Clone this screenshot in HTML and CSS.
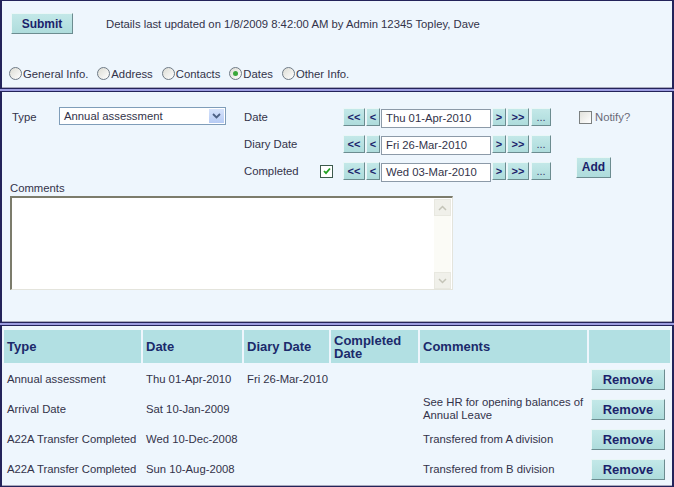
FILE: index.html
```html
<!DOCTYPE html>
<html lang="en">
<head>
  <meta charset="UTF-8" />
  <link rel="stylesheet" href="styles.css">
</head>
<body>
  <div class="page">

    <div class="panel panel-top">
      <div class="top-row">
        <button class="btn btn-submit">Submit</button>
        <span class="updated">Details last updated on 1/8/2009 8:42:00 AM by Admin 12345 Topley, Dave</span>
      </div>
      <div class="tabs">
        <label class="radio"><span class="dot"></span>General Info.</label>
        <label class="radio"><span class="dot"></span>Address</label>
        <label class="radio"><span class="dot"></span>Contacts</label>
        <label class="radio"><span class="dot on"></span>Dates</label>
        <label class="radio"><span class="dot"></span>Other Info.</label>
      </div>
    </div>

    <div class="panel panel-form">
      <div class="form-grid">
        <span class="lbl lbl-type">Type</span>
        <div class="select">
          <span class="select-text">Annual assessment</span>
          <span class="select-arrow">
            <svg width="9" height="6" viewBox="0 0 9 6"><path d="M1 1 L4.5 4.5 L8 1" fill="none" stroke="#4d6185" stroke-width="1.8"/></svg>
          </span>
        </div>
        <span class="lbl">Date</span>
        <span></span>
        <div class="datepick">
          <button class="btn nav">&lt;&lt;</button><button class="btn nav nav-s">&lt;</button><span class="date-input">Thu 01-Apr-2010</span><button class="btn nav nav-s">&gt;</button><button class="btn nav">&gt;&gt;</button><button class="btn nav nav-dots">...</button>
        </div>
        <label class="notify"><span class="check"></span>Notify?</label>

        <span></span>
        <span></span>
        <span class="lbl">Diary Date</span>
        <span></span>
        <div class="datepick">
          <button class="btn nav">&lt;&lt;</button><button class="btn nav nav-s">&lt;</button><span class="date-input">Fri 26-Mar-2010</span><button class="btn nav nav-s">&gt;</button><button class="btn nav">&gt;&gt;</button><button class="btn nav nav-dots">...</button>
        </div>
        <span></span>

        <span></span>
        <span></span>
        <span class="lbl">Completed</span>
        <span class="check checked">
          <svg width="10" height="10" viewBox="0 0 10 10"><path d="M2 5 L4 7.2 L8 2.5" fill="none" stroke="#21a121" stroke-width="1.8"/></svg>
        </span>
        <div class="datepick">
          <button class="btn nav">&lt;&lt;</button><button class="btn nav nav-s">&lt;</button><span class="date-input">Wed 03-Mar-2010</span><button class="btn nav nav-s">&gt;</button><button class="btn nav">&gt;&gt;</button><button class="btn nav nav-dots">...</button>
        </div>
        <button class="btn btn-add">Add</button>
      </div>

      <span class="lbl lbl-comments">Comments</span>
      <div class="comments-box">
        <div class="scrollbar">
          <span class="scroll-btn">
            <svg width="9" height="6" viewBox="0 0 9 6"><path d="M1 5 L4.5 1.5 L8 5" fill="none" stroke="#c4c4b8" stroke-width="1.5"/></svg>
          </span>
          <span class="scroll-btn">
            <svg width="9" height="6" viewBox="0 0 9 6"><path d="M1 1 L4.5 4.5 L8 1" fill="none" stroke="#c4c4b8" stroke-width="1.5"/></svg>
          </span>
        </div>
      </div>
    </div>

    <div class="panel panel-list">
      <table class="dates-table">
        <thead>
          <tr>
            <th class="c-type">Type</th>
            <th class="c-date">Date</th>
            <th class="c-diary">Diary Date</th>
            <th class="c-done">Completed Date</th>
            <th class="c-comm">Comments</th>
            <th></th>
          </tr>
        </thead>
        <tbody>
          <tr>
            <td>Annual assessment</td>
            <td>Thu 01-Apr-2010</td>
            <td>Fri 26-Mar-2010</td>
            <td></td>
            <td></td>
            <td class="c-act"><button class="btn btn-remove">Remove</button></td>
          </tr>
          <tr>
            <td>Arrival Date</td>
            <td>Sat 10-Jan-2009</td>
            <td></td>
            <td></td>
            <td>See HR for opening balances of Annual Leave</td>
            <td class="c-act"><button class="btn btn-remove">Remove</button></td>
          </tr>
          <tr>
            <td>A22A Transfer Completed</td>
            <td>Wed 10-Dec-2008</td>
            <td></td>
            <td></td>
            <td>Transfered from A division</td>
            <td class="c-act"><button class="btn btn-remove">Remove</button></td>
          </tr>
          <tr>
            <td>A22A Transfer Completed</td>
            <td>Sun 10-Aug-2008</td>
            <td></td>
            <td></td>
            <td>Transfered from B division</td>
            <td class="c-act"><button class="btn btn-remove">Remove</button></td>
          </tr>
        </tbody>
      </table>
    </div>

  </div>
</body>
</html>
```

FILE: styles.css
```css
body {
  margin: 0;
  font-family: 'Liberation Sans', Arial, sans-serif;
  font-size: 11.3px;
  color: #33334a;
}

.page {
  width: 674px;
  height: 487px;
  background-color: #9c9ce0;
  display: flex;
  flex-direction: column;
  gap: 2px;
}

.panel {
  box-sizing: border-box;
  background-color: #eef6fd;
  border: 1px solid #23235a;
  border-left-width: 2px;
  border-right-width: 2px;
  box-shadow: inset 0 -1px 0 #a9a9bd;
}

.btn {
  font-family: 'Liberation Sans', Arial, sans-serif;
  font-weight: bold;
  color: #1b1f6b;
  background: linear-gradient(#c3e8e8, #aedcdc);
  border: 1px solid;
  border-color: #eaf7f7 #6c8c90 #6c8c90 #eaf7f7;
  padding: 0;
  cursor: pointer;
}

/* top panel */
.panel-top {
  height: 89px;
  padding: 12px 0 0 9px;
}

.top-row {
  display: flex;
  align-items: center;
  gap: 33px;
}

.btn-submit {
  width: 62px;
  height: 21px;
  font-size: 12px;
}

.tabs {
  display: flex;
  gap: 9px;
  margin: 33px 0 0 -2px;
}

.radio {
  display: flex;
  align-items: center;
  gap: 1px;
}

.dot {
  width: 11px;
  height: 11px;
  border: 1px solid #6f7a86;
  border-radius: 50%;
  background: linear-gradient(135deg, #dcdcd4, #ffffff);
  display: flex;
  align-items: center;
  justify-content: center;
}

.dot.on::after {
  content: "";
  width: 5px;
  height: 5px;
  border-radius: 50%;
  background: #3aa83a;
}

/* form panel */
.panel-form {
  height: 232px;
  padding: 16px 0 0 8px;
}

.form-grid {
  display: grid;
  grid-template-columns: 49px 185px 76px 23px 233px 1fr;
  grid-template-rows: 18px 18px 18px;
  row-gap: 9px;
  align-items: center;
}

.lbl-type {
  padding-left: 2px;
  margin-top: -1px;
}

.select {
  box-sizing: border-box;
  width: 167px;
  height: 18px;
  margin-top: -2px;
  border: 1px solid #7f9db9;
  background: #fff;
  display: flex;
  align-items: center;
  justify-content: space-between;
  padding: 0 1px 0 4px;
}

.select-arrow {
  width: 15px;
  height: 14px;
  background: linear-gradient(#d6e3fb, #b6cbf4);
  display: flex;
  align-items: center;
  justify-content: center;
}

.datepick {
  display: flex;
  height: 18px;
  gap: 1px;
}

.nav {
  width: 22px;
  height: 18px;
  font-size: 11px;
}

.nav-s {
  width: 14px;
}

.nav-dots {
  width: 20px;
  margin-left: 1px;
  font-weight: normal;
  color: #3a3a6c;
}

.date-input {
  box-sizing: border-box;
  width: 110px;
  height: 19px;
  background: #fff;
  border: 1px solid #8c9aa8;
  padding: 2px 0 0 4px;
  margin-top: 1px;
}

.check {
  box-sizing: border-box;
  width: 13px;
  height: 13px;
  border: 1px solid #7c8080;
  background: linear-gradient(135deg, #e2e2dc, #ffffff);
  display: flex;
  align-items: center;
  justify-content: center;
}

.check.checked {
  border-color: #3c5a4c;
  background: #fff;
}

.notify {
  display: flex;
  align-items: center;
  gap: 3px;
  margin-left: 3px;
  color: #6a6a78;
}

.btn-add {
  width: 35px;
  height: 21px;
  font-size: 12px;
  margin-top: -8px;
}

.lbl-comments {
  display: block;
  line-height: 14px;
  margin-top: 1px;
}

.comments-box {
  box-sizing: border-box;
  width: 443px;
  height: 94px;
  margin-top: 1px;
  background: #fff;
  border: 2px solid #7c7c6c;
  border-right: 1px solid #e4e4dc;
  border-bottom: 1px solid #e4e4dc;
  display: flex;
  justify-content: flex-end;
}

.scrollbar {
  width: 17px;
  margin: 1px 1px 0 0;
  background: #fbfbf6;
  display: flex;
  flex-direction: column;
  justify-content: space-between;
}

.scroll-btn {
  height: 17px;
  background: #f0f0ea;
  border: 1px solid #e8e8e0;
  box-sizing: border-box;
  display: flex;
  align-items: center;
  justify-content: center;
}

/* list panel */
.panel-list {
  flex: 1;
  padding-top: 2px;
}

.dates-table {
  border-collapse: separate;
  border-spacing: 2px;
  width: 100%;
  table-layout: fixed;
}

.dates-table th {
  background-color: #b2e0e3;
  color: #1b2a6b;
  font-size: 13px;
  text-align: left;
  height: 33px;
  padding: 0 3px;
  line-height: 13px;
  vertical-align: middle;
}

.c-type { width: 131px; }
.c-date { width: 93px; }
.c-diary { width: 79px; }
.c-done { width: 81px; }
.c-comm { width: 161px; }

.dates-table td {
  height: 28px;
  padding: 0 3px;
  line-height: 13px;
  white-space: nowrap;
}

.dates-table td:nth-child(5) {
  white-space: normal;
}

.dates-table td.c-act {
  padding: 0 0 0 2px;
}

.btn-remove {
  width: 74px;
  height: 21px;
  font-size: 13px;
}
```
